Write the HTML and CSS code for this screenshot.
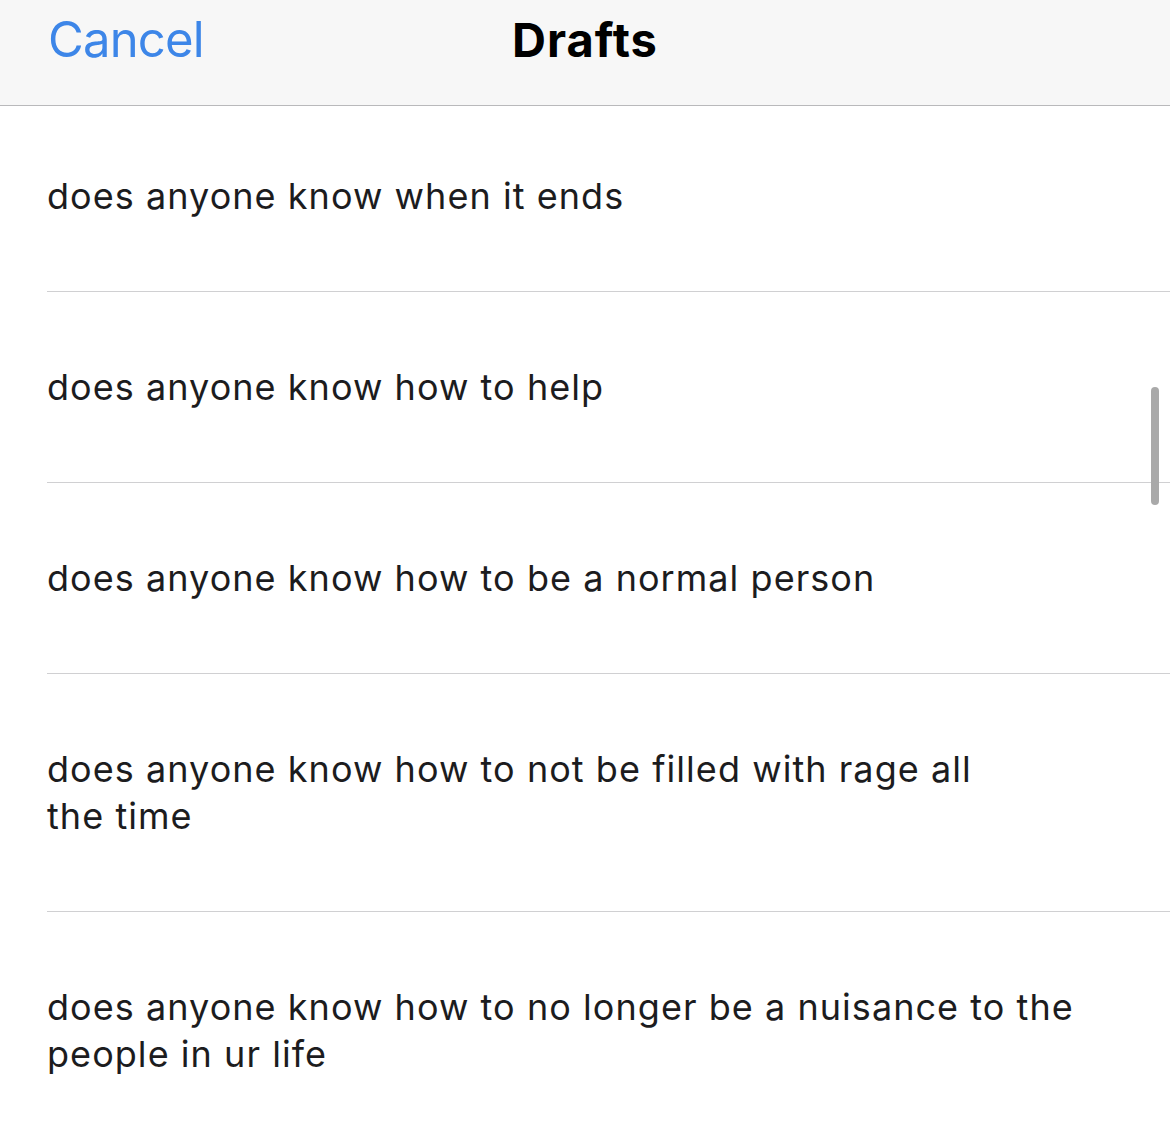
FILE: index.html
```html
<!DOCTYPE html>
<html lang="en">
<head>
<meta charset="utf-8">
<title>Drafts</title>
<link rel="stylesheet" href="styles.css">
</head>
<body>
<div class="screen">
  <header class="nav">
    <span class="cancel">Cancel</span>
    <span class="title">Drafts</span>
  </header>
  <main class="list">
    <div class="row first"><p class="text">does anyone know when it ends</p></div>
    <div class="row"><p class="text">does anyone know how to help</p></div>
    <div class="row"><p class="text">does anyone know how to be a normal person</p></div>
    <div class="row"><p class="text">does anyone know how to not be filled with rage all<br>the time</p></div>
    <div class="row"><p class="text">does anyone know how to no longer be a nuisance to the<br>people in ur life</p></div>
  </main>
  <div class="scrollbar"></div>
</div>
</body>
</html>
```

FILE: styles.css
```css
html, body {
  margin: 0;
  padding: 0;
  background: #ffffff;
}
.screen {
  position: relative;
  width: 1170px;
  height: 1137px;
  overflow: hidden;
  font-family: Inter, "Noto Sans", sans-serif;
}
.nav {
  position: relative;
  height: 105px;
  background: #f7f7f7;
  border-bottom: 1px solid #b9b9bb;
  display: flex;
  align-items: center;
}
.cancel {
  position: absolute;
  left: 48px;
  top: 10px;
  font-size: 49px;
  line-height: 60px;
  color: #3d86e8;
  letter-spacing: -0.8px;
}
.title {
  width: 100%;
  text-align: center;
  margin-top: -26px;
  font-size: 47px;
  font-weight: 700;
  letter-spacing: 1px;
  color: #000;
}
.list {
  padding-left: 47px;
}
.row {
  border-bottom: 1px solid #d0d0d2;
  padding: 72px 0 71px;
}
.row.first {
  padding-top: 67px;
}
.text {
  margin: 0;
  font-size: 36px;
  line-height: 47px;
  letter-spacing: 1.05px;
  color: #1c1c1e;
}
.scrollbar {
  position: absolute;
  left: 1151px;
  top: 387px;
  width: 8px;
  height: 118px;
  border-radius: 4px;
  background: #a9a9a9;
}
```
